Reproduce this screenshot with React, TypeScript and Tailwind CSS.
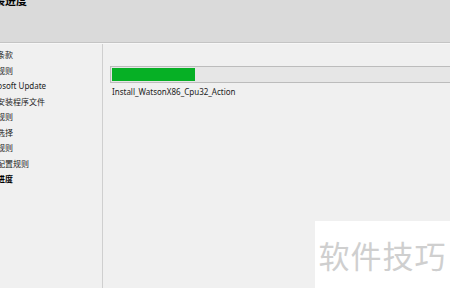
const steps = [
  '许可条款',
  '全局规则',
  'Microsoft Update',
  '安装安装程序文件',
  '安装规则',
  '功能选择',
  '功能规则',
  '功能配置规则',
  '安装进度',
]

export default function App() {
  const font = { fontFamily: '"Noto Sans", "Noto Sans CJK SC", sans-serif' }

  return (
    <div className="w-[450px] h-[288px] overflow-hidden bg-[#f0f0f0] flex flex-col relative" style={font}>
      {/* header */}
      <div className="h-[43px] shrink-0 bg-[#dadada] border-b border-[#c4c4c4] overflow-hidden">
        <div className="-mt-[6px] -ml-[17px] text-[11px] font-bold text-black leading-[14px]">安装进度</div>
      </div>

      <div className="flex flex-1 border-t border-[#f7f7f7]">
        {/* steps */}
        <div className="w-[103px] shrink-0 border-r border-[#cfcfcf] overflow-hidden pt-[3px]">
          {steps.map((s, i) => (
            <div
              key={s}
              className={
                '-ml-[19px] h-[15.5px] leading-[15.5px] text-[8px] whitespace-nowrap ' +
                (i === steps.length - 1 ? 'font-bold text-black' : 'text-[#222]')
              }
            >
              {s}
            </div>
          ))}
        </div>

        {/* progress */}
        <div className="flex-1 pl-[7px] pt-[22px]">
          <div className="w-[360px] h-[17px] border border-[#bcbcbc] bg-[#e6e6e6] p-px">
            <div className="h-full w-[83px] bg-[#06b025]" />
          </div>
          <div className="mt-[3px] ml-[2px] text-[8px] leading-[12px] text-[#222]">
            Install_WatsonX86_Cpu32_Action
          </div>
        </div>
      </div>

      {/* watermark */}
      <div className="absolute left-[315px] top-[221px] w-[135px] h-[67px] bg-white flex items-center justify-center">
        <span className="text-[31px] leading-none text-[#cfcfcf] tracking-[1px]" style={{ fontFamily: '"Noto Sans CJK SC", sans-serif' }}>
          软件技巧
        </span>
      </div>
    </div>
  )
}
